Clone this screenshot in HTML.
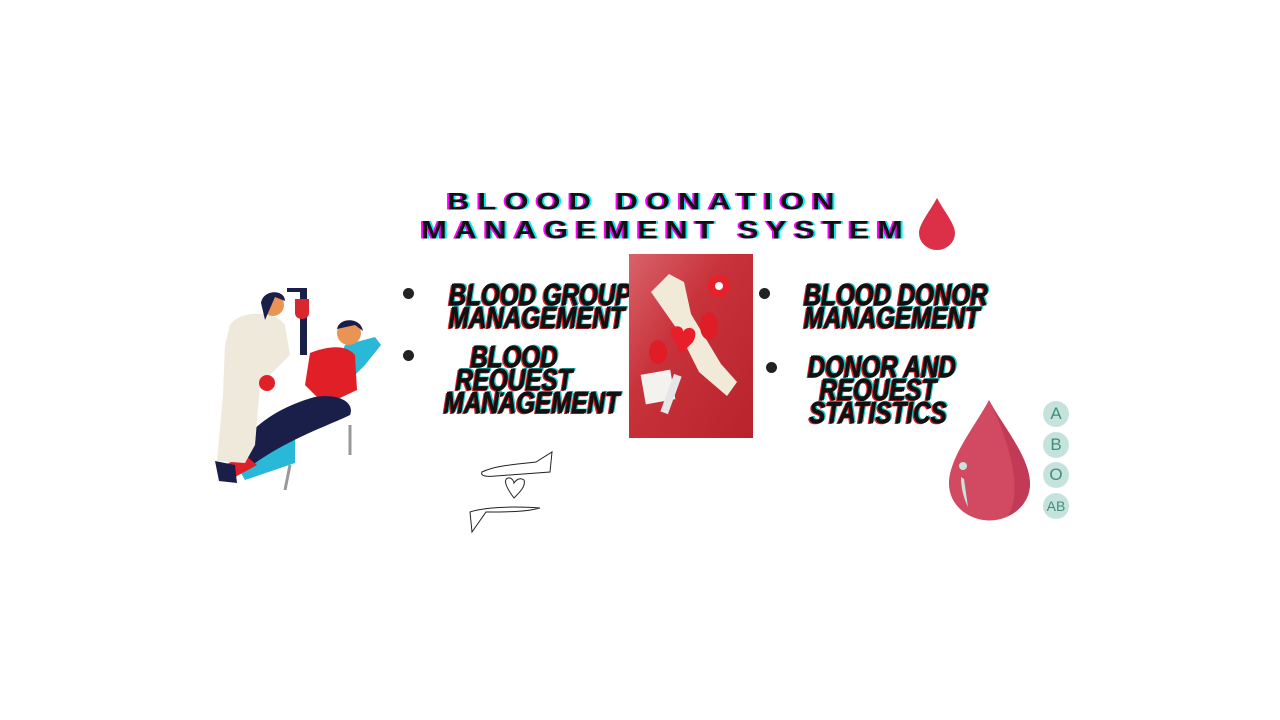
<!DOCTYPE html>
<html><head><meta charset="utf-8"><style>
body{margin:0;width:1280px;height:720px;background:#fff;position:relative;overflow:hidden;font-family:"Liberation Sans",sans-serif}
.t{position:absolute;font-weight:bold;color:#111;white-space:nowrap;text-shadow:-2px 0 #f0f,2px 0 #0ee;letter-spacing:8px;font-size:31px;line-height:31px;transform-origin:0 0}
.b{position:absolute;font-weight:900;font-style:italic;color:#111;text-align:center;font-size:31px;line-height:23px;text-shadow:-2px 1px #e0202a,2px -1px #1cc8c8;transform:scaleX(0.78);transform-origin:50% 0;white-space:nowrap;-webkit-text-stroke:0.8px #111}
.dot{position:absolute;width:11px;height:11px;border-radius:50%;background:#222}
.c{position:absolute;left:1043px;width:26px;height:26px;border-radius:50%;background:#c5e3dc;color:#3e8f78;font-size:17px;text-align:center;line-height:26px}
</style></head><body>
<div class="t" style="left:447px;top:189px;transform:scaleY(0.78)">BLOOD DONATION</div>
<div class="t" style="left:421px;top:217px;transform:scaleY(0.82);letter-spacing:7.5px">MANAGEMENT SYSTEM</div>
<svg style="position:absolute;left:918px;top:197px" width="40" height="53"><path d="M19 1 C12 14 1 27 1 36 A18 17 0 0 0 37 36 C37 27 26 14 19 1Z" fill="#dc3048"/></svg>

<div class="dot" style="left:403px;top:288px"></div>
<div class="dot" style="left:403px;top:350px"></div>
<div class="dot" style="left:759px;top:288px"></div>
<div class="dot" style="left:766px;top:362px"></div>
<div class="b" style="left:429px;width:180px;top:283px">BLOOD GROUP<br>MANAGEMENT</div>
<div class="b" style="left:424px;width:180px;top:345px">BLOOD<br>REQUEST<br>MANAGEMENT</div>
<div class="b" style="left:784px;width:180px;top:283px">BLOOD DONOR<br>MANAGEMENT</div>
<div class="b" style="left:788px;width:180px;top:355px">DONOR AND<br>REQUEST<br>STATISTICS</div>

<svg style="position:absolute;left:629px;top:254px" width="124" height="184">
<defs><linearGradient id="g" x1="0" y1="0" x2="1" y2="1"><stop offset="0" stop-color="#d9636a"/><stop offset="0.4" stop-color="#c8323a"/><stop offset="1" stop-color="#b8242c"/></linearGradient></defs>
<rect width="124" height="184" fill="url(#g)"/>
<path d="M22 38 L40 20 L55 28 L62 60 L92 110 L108 128 L98 142 L70 118 L50 78 Z" fill="#f1ead8"/>
<circle cx="90" cy="32" r="11" fill="#e8202a"/><circle cx="90" cy="32" r="4" fill="#fff"/>
<path d="M42 80 C40 70 55 70 54 78 C58 70 72 74 64 88 L52 100 Z" fill="#e81e2a"/>
<ellipse cx="80" cy="72" rx="9" ry="14" fill="#e01c26"/>
<ellipse cx="29" cy="98" rx="9" ry="12" fill="#e01c26"/>
<rect x="14" y="118" width="30" height="30" fill="#f4f2ee" transform="rotate(-10 29 133)"/>
<rect x="38" y="120" width="8" height="40" fill="#e6e6e6" transform="rotate(20 42 140)"/>
</svg>

<svg style="position:absolute;left:205px;top:285px" width="180" height="205">
<path d="M95 5 H102 V70 H95Z" fill="#1a1f4a"/><path d="M82 5 H102" stroke="#1a1f4a" stroke-width="4"/>
<path d="M90 14 h14 v14 c0 8-14 8-14 0z" fill="#d8282e"/>
<path d="M90 150 L160 80 L176 60 L170 52 L140 60 L120 110 L70 160 L30 178 L40 195 L90 178Z" fill="#2ab8d8"/>
<path d="M85 180 L80 205 M145 140 L145 170" stroke="#999" stroke-width="3"/>
<path d="M105 68 C120 62 140 58 150 70 L152 105 L120 120 L100 100Z" fill="#e01f26"/>
<circle cx="144" cy="48" r="12" fill="#e99455"/><path d="M132 44 C134 32 156 32 158 46 L150 40Z" fill="#1a1f4a"/>
<path d="M30 175 C40 140 80 120 110 112 C135 108 150 118 145 130 C125 140 80 155 45 182Z" fill="#1a1f4a"/>
<path d="M20 180 L40 170 L52 180 L30 192Z" fill="#e01f26"/>
<path d="M25 40 C35 25 70 25 80 40 L85 70 L55 100 L50 160 L40 178 L12 176 L18 110 L20 60Z" fill="#efe9dc"/>
<circle cx="68" cy="20" r="11" fill="#e99455"/><path d="M56 18 C58 4 80 4 80 16 L70 12 L60 35 Z" fill="#1a1f4a"/>
<circle cx="62" cy="98" r="8" fill="#e01f26"/>
<path d="M10 176 L30 180 L32 198 L14 196Z" fill="#1a1f4a"/>
</svg>

<svg style="position:absolute;left:466px;top:450px" width="90" height="85" fill="none" stroke="#222" stroke-width="1">
<path d="M16 22 C30 15 55 14 70 12 L86 2 L84 22 L30 26 C20 27 14 26 16 22Z"/>
<path d="M48 48 C42 40 36 30 42 28 C46 27 48 32 48 33 C50 30 54 27 58 30 C60 36 54 42 48 48Z"/>
<path d="M74 58 C60 62 40 62 20 62 L6 82 L4 62 C10 60 30 55 74 58Z"/>
</svg>

<svg style="position:absolute;left:948px;top:399px" width="84" height="122">
<path d="M41 1 C28 26 1 58 1 85 A40 36 0 0 0 82 85 C82 58 54 26 41 1Z" fill="#d24a62"/>
<path d="M41 1 C54 26 82 58 82 85 A40 36 0 0 1 60 117 C76 90 60 40 41 1Z" fill="#c23a55"/>
<circle cx="15" cy="67" r="4" fill="#c6e3dc"/><path d="M13 78 C13 90 16 100 20 108 L16 80Z" fill="#c6e3dc"/>
</svg>
<div class="c" style="top:401px">A</div>
<div class="c" style="top:432px">B</div>
<div class="c" style="top:462px">O</div>
<div class="c" style="top:493px;font-size:14px">AB</div>
</body></html>
